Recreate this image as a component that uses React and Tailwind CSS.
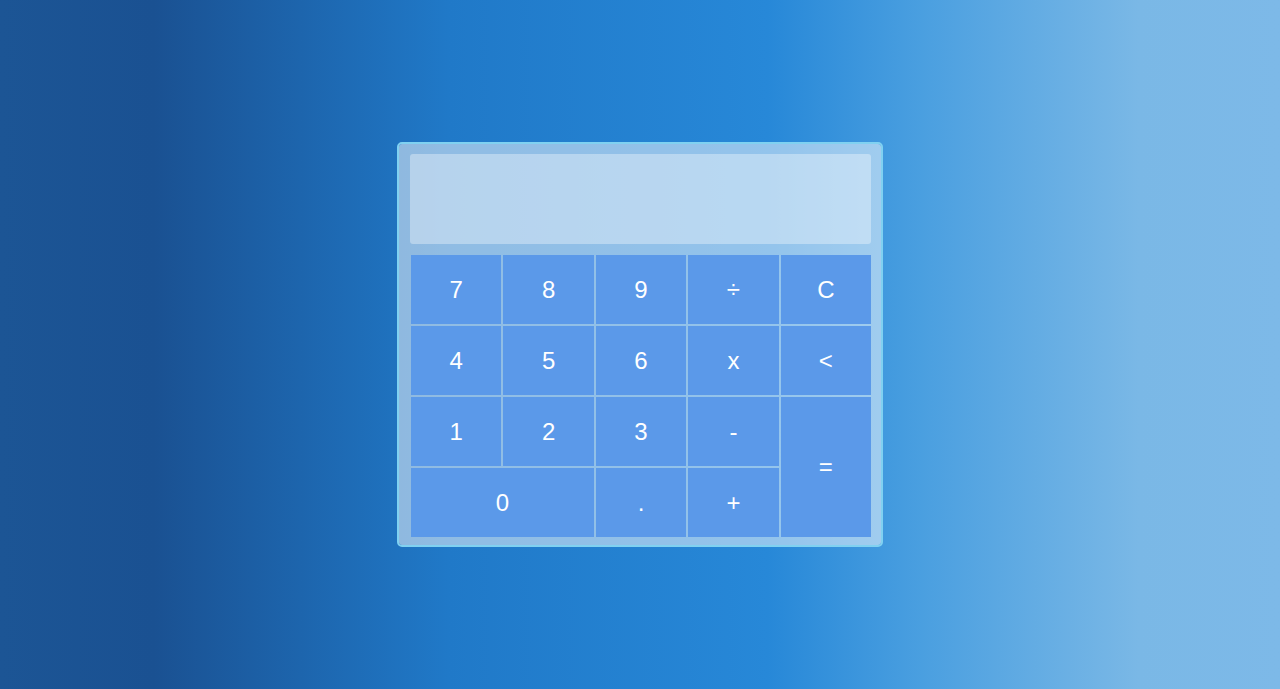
const KEYS = [
  { label: '7' },
  { label: '8' },
  { label: '9' },
  { label: '÷' },
  { label: 'C' },
  { label: '4' },
  { label: '5' },
  { label: '6' },
  { label: 'x' },
  { label: '<' },
  { label: '1' },
  { label: '2' },
  { label: '3' },
  { label: '-' },
  { label: '=', span: 'row-span-2' },
  { label: '0', span: 'col-span-2' },
  { label: '.' },
  { label: '+' },
];

export default function App() {
  return (
    <div
      className="h-screen w-full flex items-center justify-center bg-[linear-gradient(to_right,#1c5595_0%,#1a5192_12%,#2079c8_35%,#2788d8_60%,#4a9fe0_72%,#7ab8e6_89%,#7db9e8_100%)]"
      style={{ fontFamily: '"Liberation Sans", Arial, sans-serif' }}
    >
      {/* Calculator body */}
      <div className="w-[486px] rounded-[5px] border-2 border-[#80d1f1] bg-white/50 bg-clip-padding pt-[10px] pl-[11px] pr-[9px] pb-[7px]">
        {/* Display */}
        <div className="h-[90px] mb-[10px] mr-px rounded-[3px] bg-white/35" />

        {/* Keypad */}
        <div className="grid grid-cols-5 grid-rows-[repeat(4,71px)]">
          {KEYS.map((key) => (
            <button
              key={key.label}
              type="button"
              className={`flex items-center justify-center border border-transparent bg-clip-padding bg-[#5b99e9] text-white text-[24px] leading-none ${key.span || ''}`}
            >
              {key.label}
            </button>
          ))}
        </div>
      </div>
    </div>
  );
}
